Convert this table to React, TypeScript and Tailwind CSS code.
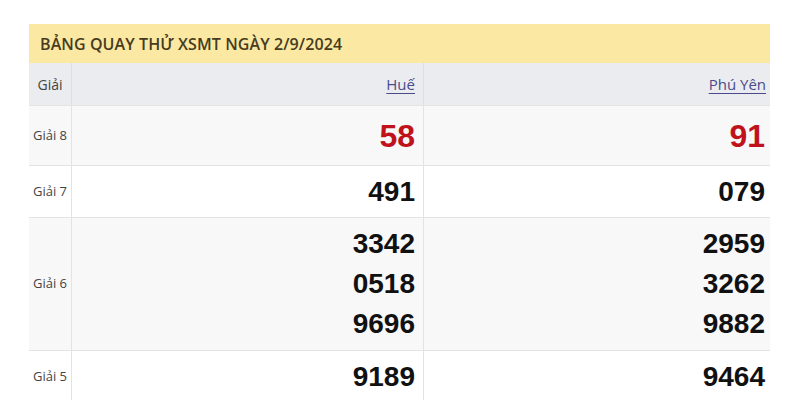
const rows = [
  { label: 'Giải 8', hue: ['58'], phuyen: ['91'], red: true, shade: true, h: 'h-[60px]' },
  { label: 'Giải 7', hue: ['491'], phuyen: ['079'], red: false, shade: false, h: 'h-[52px]' },
  { label: 'Giải 6', hue: ['3342', '0518', '9696'], phuyen: ['2959', '3262', '9882'], red: false, shade: true, h: 'h-[133px]' },
  { label: 'Giải 5', hue: ['9189'], phuyen: ['9464'], red: false, shade: false, h: 'h-[52px]' },
];

function NumberCell({ values, red, last }: { values: string[]; red: boolean; last?: boolean }) {
  return (
    <div
      className={`flex flex-col items-end justify-center ${last ? 'w-[346px] pr-[5px]' : 'w-[352px] pr-[8px] border-r border-[#e3e3e3]'}`}
    >
      {values.map((v) => (
        <span
          key={v}
          className={`leading-[40px] font-bold ${red ? 'text-[32px] text-[#c0121b]' : 'text-[28px] text-[#111]'}`}
          style={{ fontFamily: '"Liberation Sans", Arial, sans-serif' }}
        >
          {v}
        </span>
      ))}
    </div>
  );
}

export default function App() {
  return (
    <div className="w-[800px] h-[400px] overflow-hidden bg-white pt-[24px] pl-[29px]">
      <div className="w-[741px]" style={{ fontFamily: '"Open Sans", "Noto Sans", sans-serif' }}>
        {/* Title */}
        <div className="h-[39px] bg-[#fbe8a2] flex items-center pl-[11px]">
          <span className="text-[16px] font-semibold text-[#463b20] tracking-[0.1px]">
            BẢNG QUAY THỬ XSMT NGÀY 2/9/2024
          </span>
        </div>

        {/* Header */}
        <div className="h-[42px] bg-[#eaecef] flex">
          <div className="w-[43px] flex items-center justify-center border-r border-[#dcdfe3] text-[14px] text-[#444]">
            Giải
          </div>
          <div className="w-[352px] flex items-center justify-end pr-[8px] border-r border-[#dcdfe3]">
            <a className="text-[15px] text-[#4b4b8c] underline underline-offset-[3px]">Huế</a>
          </div>
          <div className="w-[346px] flex items-center justify-end pr-[4px]">
            <a className="text-[15px] text-[#4b4b8c] underline underline-offset-[3px]">Phú Yên</a>
          </div>
        </div>

        {/* Body */}
        {rows.map((r) => (
          <div
            key={r.label}
            className={`flex ${r.h} border-t border-[#e3e3e3] ${r.shade ? 'bg-[#f8f8f8]' : 'bg-white'}`}
          >
            <div className="w-[43px] flex items-center justify-center border-r border-[#e3e3e3] text-[13px] text-[#444] whitespace-nowrap">
              {r.label}
            </div>
            <NumberCell values={r.hue} red={r.red} />
            <NumberCell values={r.phuyen} red={r.red} last />
          </div>
        ))}
      </div>
    </div>
  );
}
